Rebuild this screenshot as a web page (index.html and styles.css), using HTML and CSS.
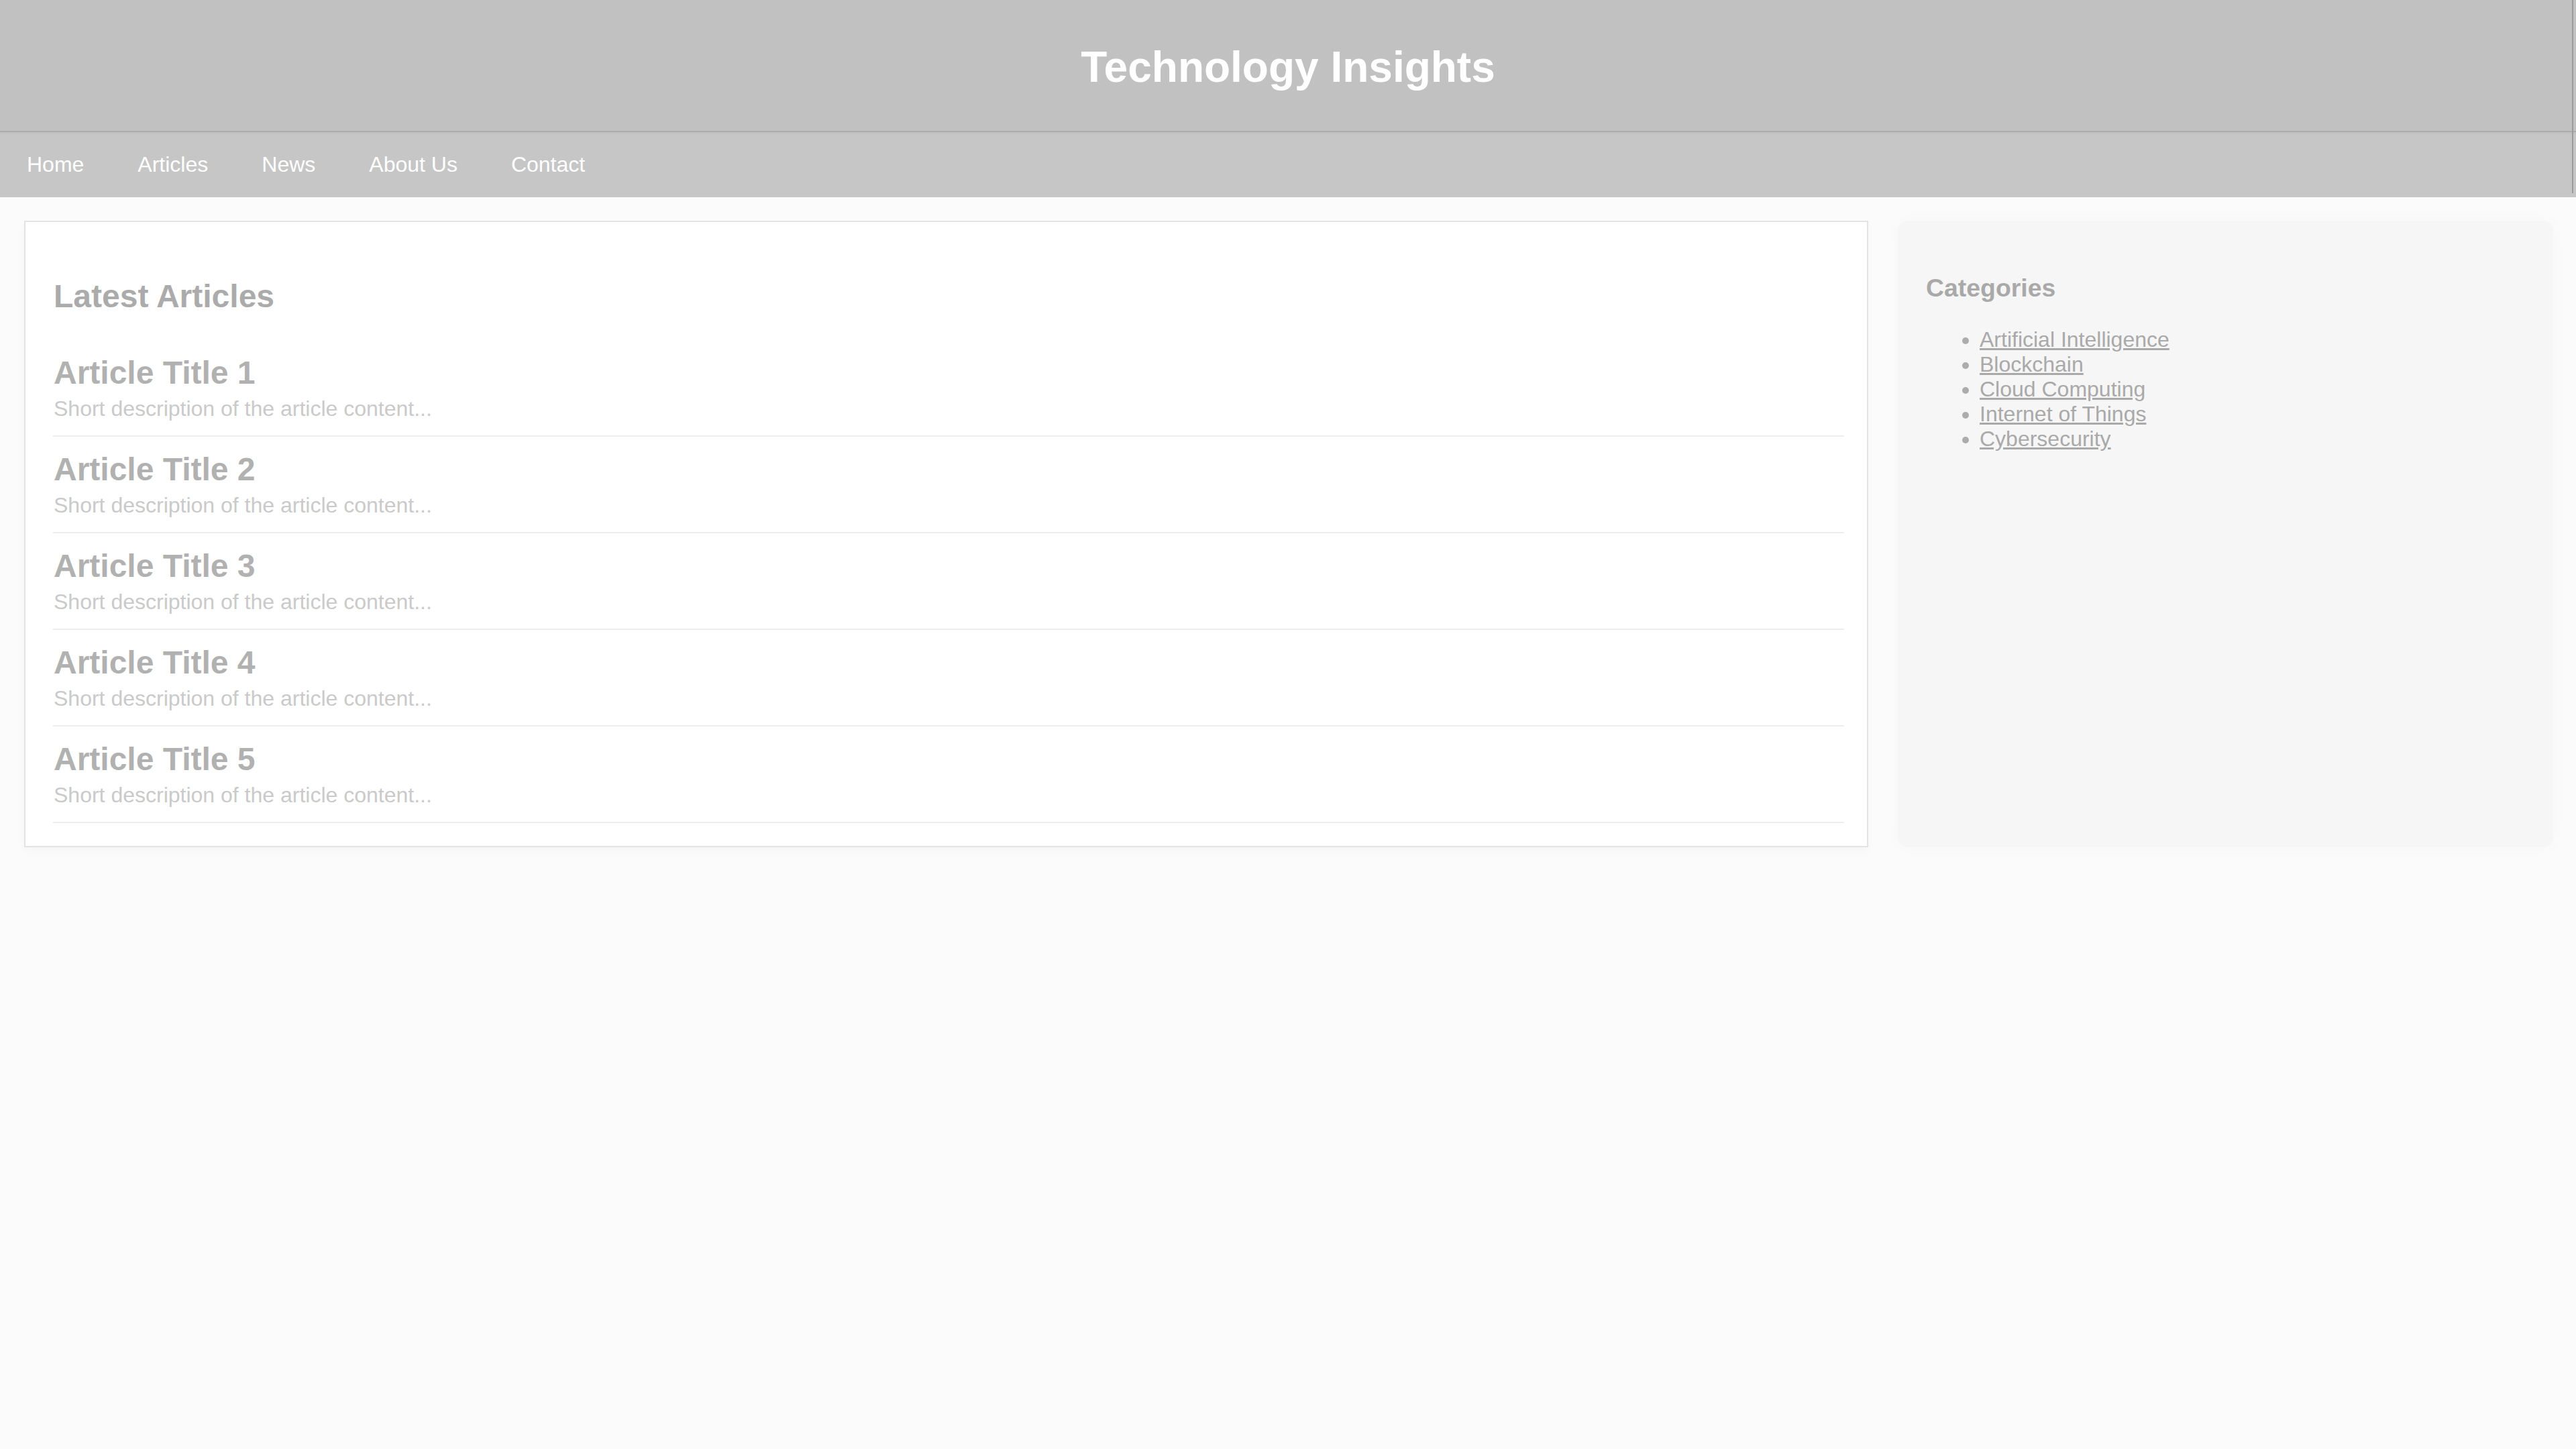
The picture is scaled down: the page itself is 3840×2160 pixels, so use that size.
FILE: index.html
```html
<!DOCTYPE html>
<html lang="en">
<head>
<meta charset="utf-8">
<title>Technology Insights</title>
<link rel="stylesheet" href="styles.css">
</head>
<body>
<div class="top">
  <header class="site-header">
    <h1 class="site-title">Technology Insights</h1>
  </header>
  <nav class="site-nav">
    <a class="nav-link" href="#">Home</a>
    <a class="nav-link" href="#">Articles</a>
    <a class="nav-link" href="#">News</a>
    <a class="nav-link" href="#">About Us</a>
    <a class="nav-link" href="#">Contact</a>
  </nav>
  <div class="edge-line"></div>
</div>
<main class="layout">
  <section class="articles">
    <h2 class="section-title">Latest Articles</h2>
    <article class="article">
      <h3 class="article-title">Article Title 1</h3>
      <p class="article-desc">Short description of the article content...</p>
    </article>
    <article class="article">
      <h3 class="article-title">Article Title 2</h3>
      <p class="article-desc">Short description of the article content...</p>
    </article>
    <article class="article">
      <h3 class="article-title">Article Title 3</h3>
      <p class="article-desc">Short description of the article content...</p>
    </article>
    <article class="article">
      <h3 class="article-title">Article Title 4</h3>
      <p class="article-desc">Short description of the article content...</p>
    </article>
    <article class="article">
      <h3 class="article-title">Article Title 5</h3>
      <p class="article-desc">Short description of the article content...</p>
    </article>
  </section>
  <aside class="sidebar">
    <h3 class="sidebar-title">Categories</h3>
    <ul class="cat-list">
      <li><a class="cat-link" href="#">Artificial Intelligence</a></li>
      <li><a class="cat-link" href="#">Blockchain</a></li>
      <li><a class="cat-link" href="#">Cloud Computing</a></li>
      <li><a class="cat-link" href="#">Internet of Things</a></li>
      <li><a class="cat-link" href="#">Cybersecurity</a></li>
    </ul>
  </aside>
</main>
</body>
</html>
```
FILE: styles.css
```css
html, body {
  margin: 0;
  padding: 0;
}
body {
  background: #fbfbfb;
  font-family: "Liberation Sans", Arial, sans-serif;
  font-size: 32px;
  color: #b8b8b8;
  min-height: 2160px;
}
.top {
  position: relative;
}
.site-header {
  background: #c1c1c1;
  padding: 64px 0 58px;
  border-bottom: 2px solid #acacac;
  text-align: center;
}
.site-title {
  margin: 0;
  font-size: 64px;
  line-height: 73px;
  font-weight: bold;
  color: #ffffff;
}
.site-nav {
  background: #c6c6c6;
  box-shadow: inset 0 4px 3px -2px rgba(0,0,0,0.04);
  display: flex;
  padding: 30px 0;
}
.nav-link {
  color: #ffffff;
  text-decoration: none;
  padding: 0 40px;
  line-height: 37px;
}
.edge-line {
  position: absolute;
  top: 0;
  right: 4px;
  width: 2px;
  height: 288px;
  background: #9c9c9c;
}
.layout {
  display: grid;
  grid-template-columns: 1fr 977px;
  column-gap: 44px;
  align-items: stretch;
  padding: 35px 34px 36px 36px;
}
.articles {
  background: #ffffff;
  border: 2px solid #e3e3e3;
  box-shadow: 0 6px 12px rgba(0,0,0,0.025);
  padding: 43px 34px 34px 41px;
}
.section-title {
  margin: 40px 0 38px 1px;
  font-size: 48px;
  line-height: 55px;
  font-weight: bold;
  color: #ababab;
}
.article {
  padding: 21px 0;
  border-bottom: 2px solid #eeeeee;
}
.article-title {
  margin: 0 0 8px 1px;
  font-size: 48px;
  line-height: 55px;
  font-weight: bold;
  color: #b1b1b1;
}
.article-desc {
  margin: 0 0 0 1px;
  line-height: 37px;
  color: #cacaca;
}
.sidebar {
  background: #f6f6f6;
  border-radius: 16px;
  box-shadow: 0 0 24px rgba(0,0,0,0.025);
  padding: 42px 40px 40px 42px;
}
.sidebar-title {
  margin: 37px 0;
  font-size: 37.4px;
  line-height: 43px;
  font-weight: bold;
  color: #a9a9a9;
}
.cat-list {
  margin: 37px 0;
  padding-left: 80px;
  color: #acacac;
}
.cat-list li {
  line-height: 37px;
}
.cat-link {
  color: #a9a9a9;
  text-decoration: underline;
}
```
